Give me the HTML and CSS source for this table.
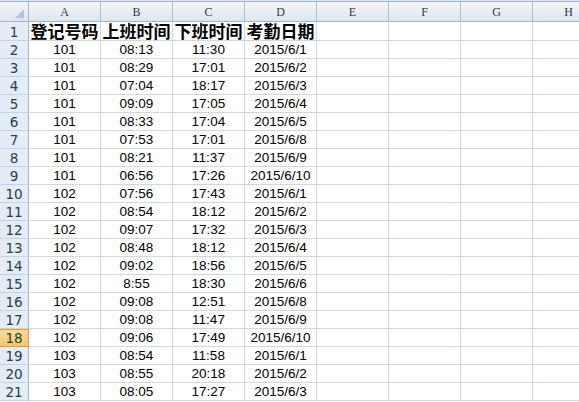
FILE: index.html
```html
<!DOCTYPE html>
<html>
<head>
<meta charset="utf-8">
<link rel="stylesheet" href="styles.css">
</head>
<body>
<div class="topline"></div>
<div class="sheet">
  <div class="ch corner"><span class="tri"></span></div>
  <div class="ch">A</div><div class="ch">B</div><div class="ch">C</div><div class="ch">D</div><div class="ch">E</div><div class="ch">F</div><div class="ch">G</div><div class="ch">H</div>

  <div class="rh r1">1</div><div class="c h">登记号码</div><div class="c h">上班时间</div><div class="c h">下班时间</div><div class="c h">考勤日期</div><div class="c"></div><div class="c"></div><div class="c"></div><div class="c"></div>

  <div class="rh">2</div><div class="c">101</div><div class="c">08:13</div><div class="c">11:30</div><div class="c">2015/6/1</div><div class="c"></div><div class="c"></div><div class="c"></div><div class="c"></div>
  <div class="rh">3</div><div class="c">101</div><div class="c">08:29</div><div class="c">17:01</div><div class="c">2015/6/2</div><div class="c"></div><div class="c"></div><div class="c"></div><div class="c"></div>
  <div class="rh">4</div><div class="c">101</div><div class="c">07:04</div><div class="c">18:17</div><div class="c">2015/6/3</div><div class="c"></div><div class="c"></div><div class="c"></div><div class="c"></div>
  <div class="rh">5</div><div class="c">101</div><div class="c">09:09</div><div class="c">17:05</div><div class="c">2015/6/4</div><div class="c"></div><div class="c"></div><div class="c"></div><div class="c"></div>
  <div class="rh">6</div><div class="c">101</div><div class="c">08:33</div><div class="c">17:04</div><div class="c">2015/6/5</div><div class="c"></div><div class="c"></div><div class="c"></div><div class="c"></div>
  <div class="rh">7</div><div class="c">101</div><div class="c">07:53</div><div class="c">17:01</div><div class="c">2015/6/8</div><div class="c"></div><div class="c"></div><div class="c"></div><div class="c"></div>
  <div class="rh">8</div><div class="c">101</div><div class="c">08:21</div><div class="c">11:37</div><div class="c">2015/6/9</div><div class="c"></div><div class="c"></div><div class="c"></div><div class="c"></div>
  <div class="rh">9</div><div class="c">101</div><div class="c">06:56</div><div class="c">17:26</div><div class="c">2015/6/10</div><div class="c"></div><div class="c"></div><div class="c"></div><div class="c"></div>
  <div class="rh">10</div><div class="c">102</div><div class="c">07:56</div><div class="c">17:43</div><div class="c">2015/6/1</div><div class="c"></div><div class="c"></div><div class="c"></div><div class="c"></div>
  <div class="rh">11</div><div class="c">102</div><div class="c">08:54</div><div class="c">18:12</div><div class="c">2015/6/2</div><div class="c"></div><div class="c"></div><div class="c"></div><div class="c"></div>
  <div class="rh">12</div><div class="c">102</div><div class="c">09:07</div><div class="c">17:32</div><div class="c">2015/6/3</div><div class="c"></div><div class="c"></div><div class="c"></div><div class="c"></div>
  <div class="rh">13</div><div class="c">102</div><div class="c">08:48</div><div class="c">18:12</div><div class="c">2015/6/4</div><div class="c"></div><div class="c"></div><div class="c"></div><div class="c"></div>
  <div class="rh">14</div><div class="c">102</div><div class="c">09:02</div><div class="c">18:56</div><div class="c">2015/6/5</div><div class="c"></div><div class="c"></div><div class="c"></div><div class="c"></div>
  <div class="rh">15</div><div class="c">102</div><div class="c">8:55</div><div class="c">18:30</div><div class="c">2015/6/6</div><div class="c"></div><div class="c"></div><div class="c"></div><div class="c"></div>
  <div class="rh">16</div><div class="c">102</div><div class="c">09:08</div><div class="c">12:51</div><div class="c">2015/6/8</div><div class="c"></div><div class="c"></div><div class="c"></div><div class="c"></div>
  <div class="rh">17</div><div class="c">102</div><div class="c">09:08</div><div class="c">11:47</div><div class="c">2015/6/9</div><div class="c"></div><div class="c"></div><div class="c"></div><div class="c"></div>
  <div class="rh sel">18</div><div class="c">102</div><div class="c">09:06</div><div class="c">17:49</div><div class="c">2015/6/10</div><div class="c"></div><div class="c"></div><div class="c"></div><div class="c"></div>
  <div class="rh">19</div><div class="c">103</div><div class="c">08:54</div><div class="c">11:58</div><div class="c">2015/6/1</div><div class="c"></div><div class="c"></div><div class="c"></div><div class="c"></div>
  <div class="rh">20</div><div class="c">103</div><div class="c">08:55</div><div class="c">20:18</div><div class="c">2015/6/2</div><div class="c"></div><div class="c"></div><div class="c"></div><div class="c"></div>
  <div class="rh">21</div><div class="c">103</div><div class="c">08:05</div><div class="c">17:27</div><div class="c">2015/6/3</div><div class="c"></div><div class="c"></div><div class="c"></div><div class="c"></div>
</div>
</body>
</html>
```
FILE: styles.css
```css
html, body {
  margin: 0;
  padding: 0;
  background: #ffffff;
  overflow: hidden;
}
body {
  width: 579px;
  height: 402px;
}
.topline {
  height: 1px;
  background: #dde5ef;
  border-bottom: 1px solid #9ab3d2;
}
.sheet {
  display: grid;
  grid-template-columns: 29px repeat(8, 72px);
  grid-template-rows: 20px 19px;
  grid-auto-rows: 18px;
  width: 605px;
}
.ch {
  box-sizing: border-box;
  background: linear-gradient(#f4f6fa, #dfe6ef);
  border-right: 1px solid #a6bbd3;
  border-bottom: 1px solid #9eb6ce;
  display: flex;
  align-items: center;
  justify-content: center;
  font-family: "Liberation Serif", serif;
  font-size: 12px;
  color: #27413e;
  padding-top: 1px;
}
.corner {
  justify-content: flex-end;
  align-items: flex-end;
  padding: 0 4px 3px 0;
  border-right-color: #9eb6ce;
}
.tri {
  display: block;
  width: 9px;
  height: 9px;
  background: #b7c5d8;
  clip-path: polygon(100% 0, 100% 100%, 0 100%);
}
.rh {
  box-sizing: border-box;
  background: #e4ecf7;
  border-right: 1px solid #9eb6ce;
  border-bottom: 1px solid #c5d3e5;
  display: flex;
  align-items: flex-end;
  justify-content: center;
  font-family: "DejaVu Sans", sans-serif;
  font-size: 13.5px;
  line-height: 16px;
  color: #27413e;
}
.rh.sel {
  background: linear-gradient(#f9d99c, #f6c768);
  border-right-color: #f29536;
  border-bottom-color: #f29536;
  border-top: 1px solid #f29536;
}
.c {
  box-sizing: border-box;
  border-right: 1px solid #d0d7e5;
  border-bottom: 1px solid #d0d7e5;
  display: flex;
  align-items: flex-end;
  justify-content: center;
  font-family: "Liberation Sans", sans-serif;
  font-size: 13.5px;
  line-height: 16px;
  color: #000000;
  white-space: nowrap;
  overflow: visible;
}
.c.h {
  font-family: "Noto Sans CJK SC", sans-serif;
  font-weight: bold;
  font-size: 17px;
  line-height: 18px;
}
```
